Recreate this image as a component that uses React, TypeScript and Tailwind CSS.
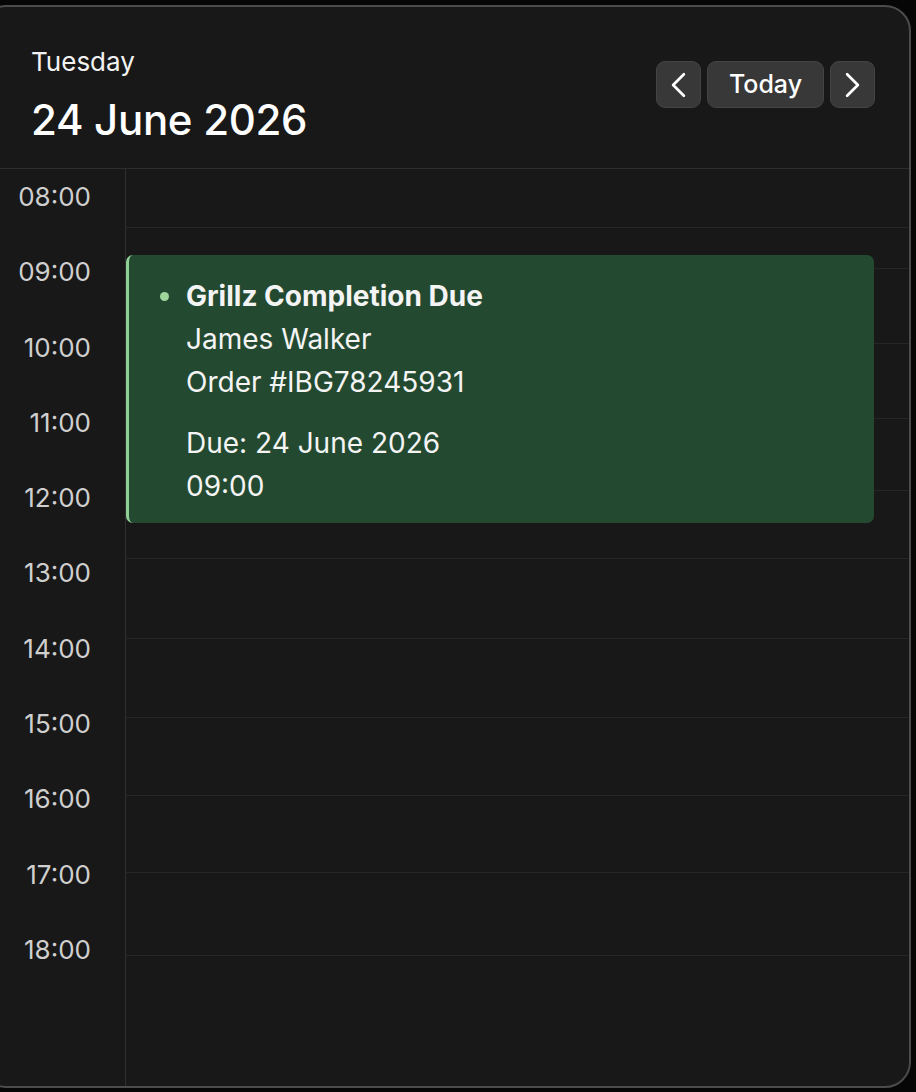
import React from 'react';
import { ChevronLeft, ChevronRight } from 'lucide-react';

const hours = ['08:00', '09:00', '10:00', '11:00', '12:00', '13:00', '14:00', '15:00', '16:00', '17:00', '18:00'];

// grid rows, heights taken from the line positions in the design
const rows = ['h-[59px]', 'h-[41px]', 'h-[75px]', 'h-[75px]', 'h-[72px]', 'h-[68px]', 'h-[80px]', 'h-[79px]', 'h-[78px]', 'h-[77px]', 'h-[83px]'];

export default function App() {
  return (
    <div className="h-[1092px] w-[916px] overflow-hidden bg-[#060606] pt-[5px] font-['Inter','Noto_Sans',sans-serif]">
      <div className="ml-[-20px] flex h-[1083px] w-[931px] flex-col overflow-hidden rounded-[26px] border-2 border-[#4b4b4b] bg-[#181818]">
        {/* Header */}
        <div className="flex h-[162px] shrink-0 justify-between border-b border-[#2d2d2d] pl-[49px] pr-[34px]">
          <div className="pt-[39px]">
            <div className="text-[26px] leading-[32px] text-[#f2f2f2]">Tuesday</div>
            <div className="mt-[18px] text-[42px] font-medium leading-[48px] tracking-[-0.3px] text-white">24 June 2026</div>
          </div>
          <div className="flex items-start gap-[6px] pt-[54px]">
            <button className="flex h-[47px] w-[45px] items-center justify-center rounded-[9px] border border-[#444] bg-[#383838] text-white">
              <ChevronLeft size={46} strokeWidth={1.5} />
            </button>
            <button className="flex h-[47px] w-[117px] items-center justify-center rounded-[9px] border border-[#444] bg-[#383838] text-[25px] font-medium text-white">
              Today
            </button>
            <button className="flex h-[47px] w-[45px] items-center justify-center rounded-[9px] border border-[#444] bg-[#383838] text-white">
              <ChevronRight size={46} strokeWidth={1.5} />
            </button>
          </div>
        </div>

        {/* Body */}
        <div className="flex flex-1">
          <div className="flex w-[144px] shrink-0 flex-col gap-[51.3px] border-r border-[#2f2f2f] pr-[34px] pt-[16px] text-right">
            {hours.map((h) => (
              <div key={h} className="h-6 text-[26px] leading-6 text-[#cfcfcf]">
                {h}
              </div>
            ))}
          </div>

          <div className="relative flex-1">
            {rows.map((r, i) => (
              <div key={i} className={`${r} border-b border-[#262626]`} />
            ))}

            {/* Event */}
            <div className="absolute left-0 top-[86px] h-[268px] w-[748px] rounded-[7px] border-l-[3px] border-[#8dcf95] bg-[#234a31] pl-[57px] pt-[20px] text-[28px] leading-[43px] text-[#f4f4f4]">
              <div className="relative font-bold">
                <span className="absolute left-[-26px] top-[17px] h-[9px] w-[9px] rounded-full bg-[#9fd69c]" />
                Grillz Completion Due
              </div>
              <div>James Walker</div>
              <div>Order #IBG78245931</div>
              <div className="mt-[18px]">Due: 24 June 2026</div>
              <div>09:00</div>
            </div>
          </div>
        </div>
      </div>
    </div>
  );
}
